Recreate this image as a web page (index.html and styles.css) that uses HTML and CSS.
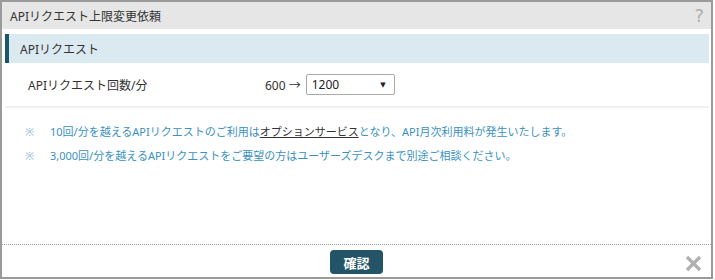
FILE: index.html
```html
<!DOCTYPE html>
<html lang="ja">
<head>
<meta charset="utf-8">
<title>APIリクエスト上限変更依頼</title>
<link rel="stylesheet" href="styles.css">
</head>
<body>
<div class="dialog">
  <div class="dlg-header">
    <span class="dlg-title">APIリクエスト上限変更依頼</span>
    <span class="help">?</span>
  </div>
  <div class="dlg-body">
    <div class="section-head">APIリクエスト</div>
    <div class="form-row">
      <div class="form-label">APIリクエスト回数/分</div>
      <div class="form-value">
        <span class="current">600 →</span>
        <div class="select-box"><span>1200</span><span class="caret">▼</span></div>
      </div>
    </div>
    <div class="notes">
      <p class="note"><span class="mark">※</span><span>10回/分を越えるAPIリクエストのご利用は<a class="link" href="#">オプションサービス</a>となり、API月次利用料が発生いたします。</span></p>
      <p class="note"><span class="mark">※</span><span>3,000回/分を越えるAPIリクエストをご要望の方はユーザーズデスクまで別途ご相談ください。</span></p>
    </div>
  </div>
  <div class="dlg-footer">
    <button class="btn-primary" type="button">確認</button>
    <svg class="close" width="17" height="17" viewBox="0 0 17 17" aria-hidden="true"><path d="M2 2 L15 15 M15 2 L2 15" stroke="#b0b0b0" stroke-width="3.2" stroke-linecap="butt"/></svg>
  </div>
</div>
</body>
</html>
```
FILE: styles.css
```css
* { box-sizing: border-box; }
body {
  margin: 0;
  font-family: "Noto Sans", "Noto Sans CJK JP", sans-serif;
  font-size: 12px;
  color: #333;
  background: #fff;
}
.dialog {
  width: 713px;
  height: 279px;
  border: 2px solid #9a9a9a;
  display: flex;
  flex-direction: column;
  position: relative;
}
.dlg-header {
  height: 27px;
  background: #e6e6e6;
  display: flex;
  align-items: center;
  padding-left: 8px;
  position: relative;
}
.dlg-title { font-size: 12px; color: #333; }
.help {
  position: absolute;
  right: 7px;
  top: 3px;
  font-size: 18px;
  color: #b0b0b0;
  font-family: "DejaVu Sans", sans-serif;
}
.dlg-body {
  flex: 1;
  padding-top: 5px;
}
.section-head {
  margin: 0 2px 0 3px;
  height: 29px;
  background: #dbe9f0;
  border-left: 4px solid #1b5670;
  padding-left: 11px;
  display: flex;
  align-items: center;
}
.form-row {
  height: 45px;
  display: flex;
  align-items: center;
  padding-left: 23px;
  margin: 0 2px 0 3px;
  border-bottom: 2px solid #f0f0f0;
}
.form-label { width: 237px; }
.form-value { display: flex; align-items: center; }
.current { margin-right: 5px; }
.select-box {
  width: 89px;
  height: 21px;
  border: 1px solid #a9a9a9;
  border-radius: 2px;
  display: flex;
  align-items: center;
  justify-content: space-between;
  padding: 0 8px 0 5px;
  color: #222;
}
.caret { font-size: 7px; color: #222; font-family: "DejaVu Sans", sans-serif; }
.notes {
  padding: 11px 0 0 23px;
}
.note {
  margin: 0;
  height: 24px;
  display: flex;
  align-items: center;
  font-size: 11px;
  color: #3a91bf;
}
.mark {
  width: 25px;
  color: #8dbcd6;
}
.link { color: #333; text-decoration: underline; }
.dlg-footer {
  border-top: 1px dotted #a0a0a0;
  height: 33px;
  display: flex;
  justify-content: center;
  padding-top: 5px;
  position: relative;
}
.btn-primary {
  width: 53px;
  height: 24px;
  background: #245468;
  color: #fff;
  border: none;
  border-radius: 4px;
  font-family: "Noto Sans CJK JP", sans-serif;
  font-size: 13px;
  font-weight: bold;
  padding: 0;
}
.close {
  position: absolute;
  right: 9px;
  top: 10px;
}
```
